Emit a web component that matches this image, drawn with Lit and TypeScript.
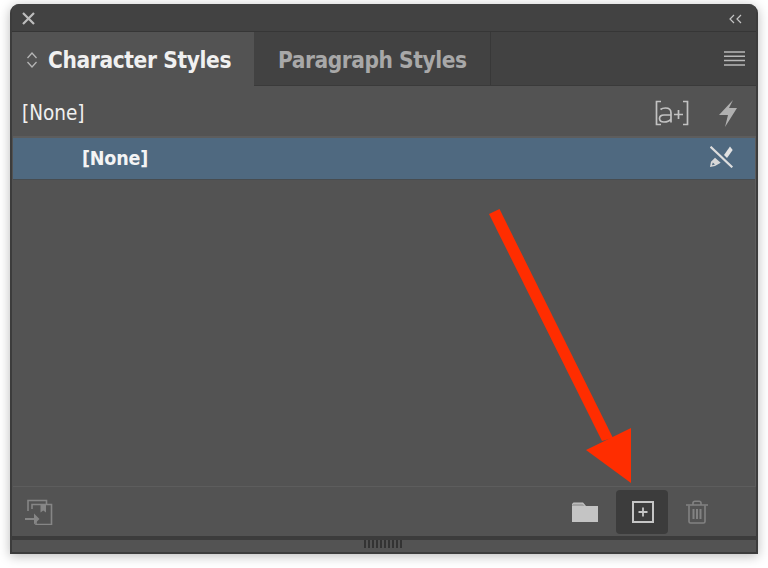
import { LitElement, html, css } from "lit";
import { customElement } from "lit/decorators.js";

@customElement("app-root")
export class AppRoot extends LitElement {
  static styles = css`
    :host { display: block; width: 768px; height: 568px; background: #fff; position: relative; overflow: hidden; font-family: "DejaVu Sans", sans-serif; font-stretch: condensed; padding: 4px 10px 14px; box-sizing: border-box; }
    .panel { height: 550px; box-sizing: border-box; border: solid #3c3c3c; border-width: 0 2px 2px; border-radius: 9px 9px 0 0; background: #535353; box-shadow: 0 2px 12px rgba(0,0,0,.28); display: flex; flex-direction: column; overflow: hidden; }
    .title { height: 28px; flex: none; box-sizing: border-box; background: #424242; border-bottom: 1px solid #363636; display: flex; align-items: center; justify-content: space-between; padding: 2px 12px 0 9px; }
    .tabs { height: 54px; flex: none; box-sizing: border-box; display: flex; background: #424242; border-bottom: 1px solid #3a3a3a; }
    .tab { box-sizing: border-box; display: flex; align-items: center; font-weight: 700; font-size: 22.5px; letter-spacing: -.38px; white-space: nowrap; padding-top: 2px; }
    .active { width: 242px; height: 54px; background: #535353; color: #f0f0f0; padding-left: 14px; gap: 10px; }
    .other { width: 237px; color: #a8a8a8; padding-left: 24px; border-right: 1px solid #383838; letter-spacing: -.45px; }
    .menu { margin-left: auto; align-self: center; margin-right: 11px; display: flex; }
    .tools { height: 50px; flex: none; box-sizing: border-box; display: flex; align-items: center; padding: 3px 19px 0 10px; color: #f0f0f0; font-size: 20.5px; letter-spacing: 0; }
    .tool-icons { margin-left: auto; display: flex; align-items: center; gap: 30px; }
    .list { flex: 1; box-sizing: border-box; margin: 0 0 0 1px; border: solid #5d5d5d; border-width: 2px 1px 1px 0; display: flex; flex-direction: column; }
    .row { height: 42px; flex: none; box-sizing: border-box; background: #4f6980; border-bottom: 1px solid #474c50; display: flex; align-items: center; justify-content: space-between; padding: 0 22px 0 69px; color: #f4f4f4; font-weight: 700; font-size: 19.5px; letter-spacing: -.2px; }
    .row svg { margin-bottom: 4px; }
    .footer { height: 49px; flex: none; box-sizing: border-box; display: flex; align-items: center; padding: 0 48px 0 13px; }
    .spacer { flex: 1; }
    .new { width: 52px; height: 44px; margin: 0 18px; box-sizing: border-box; padding-left: 2px; border-radius: 4px; background: #3c3c3c; display: flex; align-items: center; justify-content: center; }
    .rule { height: 4px; flex: none; background: #3c3c3c; }
    .grip { flex: 1; display: flex; justify-content: center; }
    .grip i { width: 2px; height: 8px; background: #333; margin-right: 2px; }
    .grip-row { height: 12px; flex: none; display: flex; }
    .arrow { position: absolute; left: 0; top: 0; pointer-events: none; }
    svg { display: block; }
  `;

  render() {
    return html`
      <div class="panel">
        <div class="title">
          <svg width="15" height="15" viewBox="0 0 15 15"><path d="M2 2 13 13M13 2 2 13" stroke="#bdbdbd" stroke-width="2.2" fill="none"/></svg>
          <svg width="16" height="10" viewBox="0 0 16 10"><path d="M6 1 2 5l4 4M13 1 9 5l4 4" stroke="#c4c4c4" stroke-width="1.2" fill="none"/></svg>
        </div>
        <div class="tabs">
          <div class="tab active">
            <svg width="12" height="18" viewBox="0 0 12 18"><path d="M1.5 7 6 2l4.500 5M1.500 11 6 16l4.500-5" stroke="#b5b5b5" stroke-width="1.300" fill="none"/></svg>
            <span>Character Styles</span>
          </div>
          <div class="tab other">Paragraph Styles</div>
          <div class="menu">
            <svg width="21" height="15" viewBox="0 0 21 15"><path d="M0 1h21M0 5.300h21M0 9.600h21M0 13.900h21" stroke="#b8b8b8" stroke-width="1.500"/></svg>
          </div>
        </div>
        <div class="tools">
          <span>[None]</span>
          <div class="tool-icons">
            <svg width="34" height="26" viewBox="0 0 34 26" fill="none" stroke="#c2c2c2" stroke-width="1.700">
              <path d="M6 1.500H1.500v23H6M28 1.500h4.500v23H28"/>
              <path d="M5.500 9.500c1.200-1 2.800-1.500 5-1.500 3.700 0 5.500 1.700 5.500 5v9.500M16 15H9c-3 0-4.500 1.500-4.500 3.600S6 22 9 22c3 0 5.500-1 7-3"/>
              <path d="M19 14.500h9M23.500 10v9"/>
            </svg>
            <svg width="18" height="28" viewBox="0 0 18 28"><path d="M14 1 0 16h9L6 28 18 9h-8L14 1z" fill="#b0b0b0"/></svg>
          </div>
        </div>
        <div class="list">
          <div class="row">
            <span>[None]</span>
            <svg width="23" height="22" viewBox="0 0 23 22">
              <path d="M14 9 20 .5l2.700 3.500L17 12z" fill="#e2e2e2"/>
              <path fill-rule="evenodd" d="M5 11.700 10.700 16.700 5 20 0 21l1-5.300zM2.800 16.500l-.8 2.800 3-.9z" fill="#d8d8d8"/>
              <path d="M.5.700 22.300 21.300" stroke="#4f6980" stroke-width="4.500"/>
              <path d="M.5.700 22.300 21.300" stroke="#dedede" stroke-width="2.200"/>
            </svg>
          </div>
        </div>
        <div class="footer">
          <svg width="28" height="26" viewBox="0 0 28 26" fill="none" stroke="#868686" stroke-width="1.600">
            <path d="M3 12V1.500h18.500V5"/>
            <path d="M7 10V5.500h19.500v20H11v-4"/>
            <path d="M15.500 5.500h5.500v8l-2.700-2-2.800 2z" fill="#868686" stroke="none"/>
            <path d="M0 20h10" stroke-width="2"/>
            <path d="M9 14.500 14.500 20 9 25.500z" fill="#868686" stroke="none"/>
          </svg>
          <div class="spacer"></div>
          <svg width="26" height="20" viewBox="0 0 26 20"><path d="M0 2 1.500.5h9.500L14 4h12v16H0z" fill="#c4c4c4"/><path d="M0 4h12.800L10.500 1.800H1.500L0 3z" fill="#535353" opacity=".3"/></svg>
          <div class="new">
            <svg width="22" height="22" viewBox="0 0 22 22" fill="none" stroke="#c6c6c6"><rect x="1" y="1" width="20" height="20" stroke-width="2"/><path d="M11 6.500v9M6.500 11h9" stroke-width="1.800"/></svg>
          </div>
          <svg width="22" height="24" viewBox="0 0 22 24" fill="none" stroke="#828282" stroke-width="1.600">
            <path d="M0 5h22M7 4.500V3q0-1.800 2-1.800h4q2 0 2 1.800v1.500"/>
            <path d="M3 5.500v16q0 1.500 1.500 1.500h13q1.500 0 1.500-1.500v-16"/>
            <path d="M7.500 9v10M11 9v10M14.500 9v10" stroke-width="2"/>
          </svg>
        </div>
        <div class="rule"></div>
        <div class="grip-row">
          <div class="grip">${Array.from({ length: 10 }, () => html`<i></i>`)}</div>
        </div>
      </div>
      <svg class="arrow" width="768" height="568" viewBox="0 0 768 568">
        <path d="M489 214 499.500 209 613 438 602 441z" fill="#ff2d00"/>
        <path d="M631 428V483L586 450z" fill="#ff2d00"/>
      </svg>
    `;
  }
}
